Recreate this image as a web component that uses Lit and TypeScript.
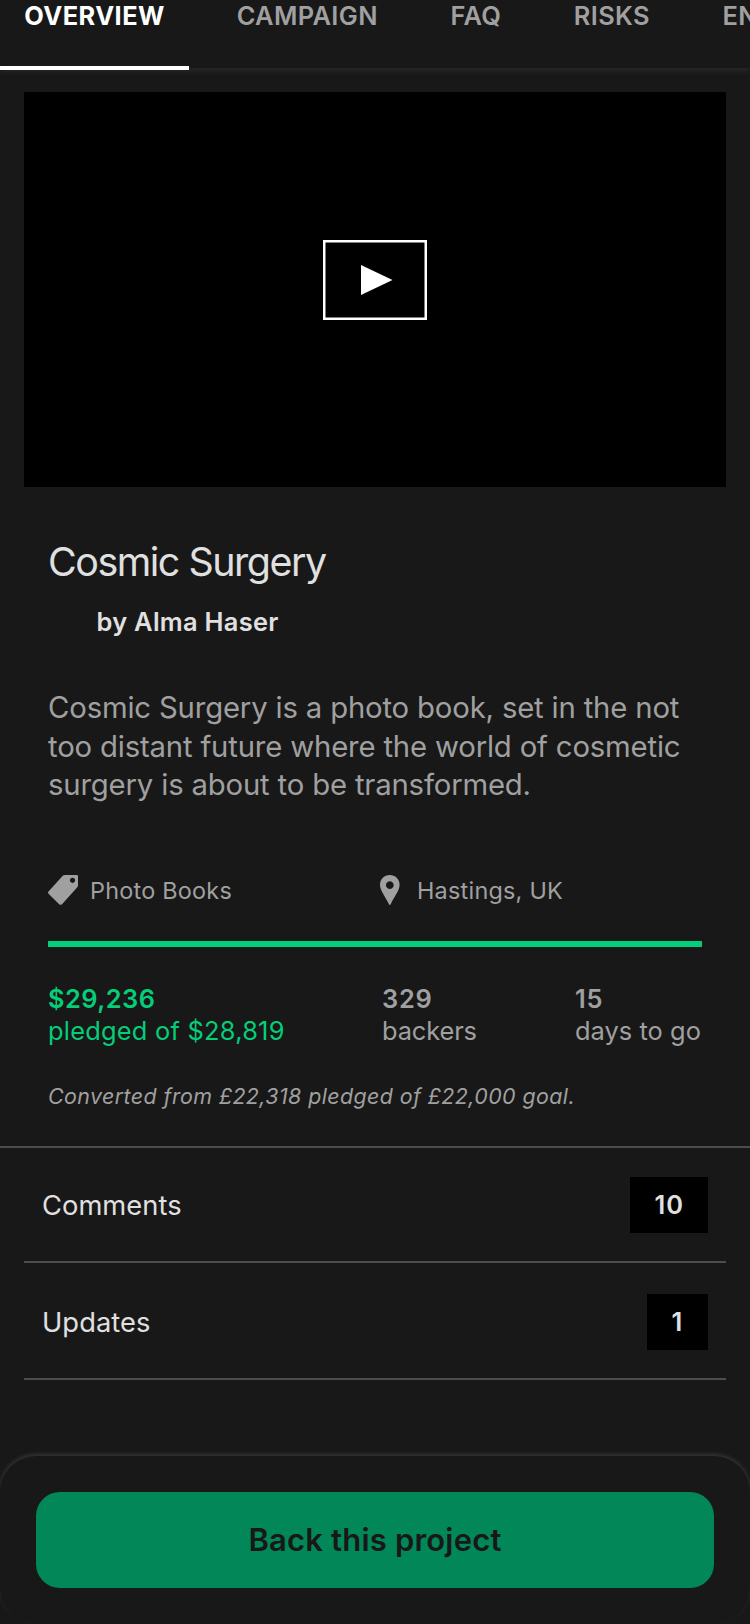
import { LitElement, html, css } from "lit";
import { customElement, property } from "lit/decorators.js";
import { classMap } from "lit/directives/class-map.js";

interface Stat {
  kind: string;
  value: string;
  label: string;
}

@customElement("project-tabs")
class ProjectTabs extends LitElement {
  @property({ attribute: false }) tabs: string[] = [];
  @property({ type: Number }) active = 0;

  static styles = css`
    :host {
      display: block;
      height: 68px;
      box-shadow: 0 2px 8px rgba(255, 255, 255, 0.09);
    }
    .tabs {
      display: flex;
      gap: 72.6px;
      padding-left: 24.3px;
      height: 70px;
    }
    .tab {
      flex: none;
      font-size: 25.4px;
      font-weight: 600;
      line-height: 32px;
      letter-spacing: 0.38px;
      color: #a0a0a0;
      white-space: nowrap;
    }
    .active {
      box-sizing: border-box;
      font-weight: 700;
      letter-spacing: 0.45px;
      color: #fff;
      border-bottom: 4px solid #fff;
      margin: 0 -25.2px 0 -24.3px;
      padding: 0 24.4px 0 24.3px;
    }
  `;

  render() {
    return html`<nav class="tabs">
      ${this.tabs.map(
        (t, i) => html`<span class=${classMap({ tab: true, active: i === this.active })}>${t}</span>`
      )}
    </nav>`;
  }
}

@customElement("count-row")
class CountRow extends LitElement {
  @property() label = "";
  @property({ type: Number }) count = 0;

  static styles = css`
    :host {
      display: flex;
      justify-content: space-between;
      align-items: center;
      height: 56px;
      padding: 31px 18px 28px;
      border-bottom: 2px solid #4d4d4d;
    }
    .label {
      padding-top: 2px;
      font-size: 27.3px;
      line-height: 56px;
      letter-spacing: 0.05px;
      color: #e0e0e0;
    }
    .count {
      box-sizing: border-box;
      min-width: 61px;
      background: #000;
      padding: 0 24px 0 24.5px;
      font-size: 25.4px;
      font-weight: 600;
      line-height: 56px;
      letter-spacing: 1px;
      color: #e0e0e0;
    }
  `;

  render() {
    return html`<span class="label">${this.label}</span><span class="count">${this.count}</span>`;
  }
}

@customElement("app-root")
class AppRoot extends LitElement {
  private tabs = ["OVERVIEW", "CAMPAIGN", "FAQ", "RISKS", "ENVIRONMENT"];
  private stats: Stat[] = [
    { kind: "pledged", value: "$29,236", label: "pledged of $28,819" },
    { kind: "backers", value: "329", label: "backers" },
    { kind: "days", value: "15", label: "days to go" },
  ];

  static styles = css`
    :host {
      display: flex;
      flex-direction: column;
      width: 750px;
      height: 1624px;
      overflow: hidden;
      background: #181818;
      color: #a0a0a0;
      font-family: Inter, "Liberation Sans", sans-serif;
    }
    .video {
      flex: none;
      display: grid;
      place-items: center;
      height: 395px;
      margin: 24px 24px 0;
      background: #000;
    }
    .play {
      display: block;
      width: 104px;
      height: 80px;
      margin-top: -19px;
    }
    .details {
      padding: 51px 48px 34px;
      border-bottom: 2px solid #4d4d4d;
    }
    h1 {
      margin: 0;
      font-size: 39.4px;
      font-weight: 400;
      line-height: 48px;
      letter-spacing: -1.48px;
      color: #e0e0e0;
    }
    .author {
      margin: 20px 0 0 48.5px;
      font-size: 25.4px;
      font-weight: 600;
      line-height: 32px;
      letter-spacing: 0.3px;
      color: #e0e0e0;
    }
    .blurb {
      margin: 51.2px -10px 0 0;
      font-size: 29.3px;
      line-height: 38.5px;
      letter-spacing: -0.17px;
    }
    .meta {
      display: grid;
      grid-template-columns: 332px 1fr;
      margin-top: 70.3px;
      font-size: 23.4px;
      line-height: 32px;
      height: 30px;
      letter-spacing: 0.24px;
    }
    .meta-item {
      display: flex;
      gap: 12px;
    }
    .pin {
      gap: 17px;
    }
    .icon {
      display: block;
      height: 30px;
      fill: #a0a0a0;
    }
    .progress {
      height: 6px;
      margin-top: 36px;
      background: #05ce78;
    }
    .stats {
      display: grid;
      grid-template-columns: 334px 193px 1fr;
      margin-top: 36px;
      font-size: 25.4px;
      line-height: 32px;
      white-space: nowrap;
    }
    .value {
      font-weight: 600;
      letter-spacing: 0.45px;
    }
    .pledged {
      color: #05ce78;
      letter-spacing: 0.24px;
    }
    .backers {
      letter-spacing: -0.12px;
    }
    .days {
      letter-spacing: 0.05px;
    }
    .backers .value,
    .days .value {
      letter-spacing: 0.8px;
    }
    .converted {
      margin-top: 33px;
      font-size: 21.4px;
      font-style: italic;
      line-height: 32px;
      letter-spacing: 0.42px;
      white-space: nowrap;
    }
    .links {
      margin: -2px 24px 0;
    }
    .footer {
      flex: none;
      box-sizing: border-box;
      height: 168px;
      margin-top: auto;
      padding: 36px;
      border-radius: 36px;
      background: #181818;
      box-shadow: 0 -2px 4px rgba(255, 255, 255, 0.13);
    }
    .back {
      display: block;
      box-sizing: border-box;
      width: 100%;
      height: 96px;
      border: 0;
      border-radius: 24px;
      padding: 0 0 2px;
      background: #028858;
      color: #181818;
      font-family: inherit;
      font-size: 31px;
      font-weight: 600;
      letter-spacing: 0.18px;
    }
  `;

  render() {
    return html`
      <project-tabs .tabs=${this.tabs}></project-tabs>
      <div class="video">
        <svg class="play" viewBox="0 0 104 80">
          <rect x="1.25" y="1.25" width="101.5" height="77.5" fill="none" stroke="#fff" stroke-width="2.5" />
          <path d="M38 25L69.5 40L38 55Z" fill="#fff" />
        </svg>
      </div>
      <section class="details">
        <h1>Cosmic Surgery</h1>
        <div class="author">by Alma Haser</div>
        <div class="blurb">
          Cosmic Surgery is a photo book, set in the not<br />
          too distant future where the world of cosmetic<br />
          surgery is about to be transformed.
        </div>
        <div class="meta">
          <div class="meta-item">
            <svg class="icon" width="30" viewBox="0 0 30 30">
              <path
                fill-rule="evenodd"
                d="M15 0.6Q15.7 0 16.6 0H29Q30 0 30 1V10.6Q30 11.5 29.3 12.2L14 29.3Q12.6 30.4 11.2 29.3L0.5 18.8Q-0.4 17.6 0.5 16.4ZM24.5 2.7a2.6 2.6 0 1 0 0.01 0Z"
              />
            </svg>
            <span>Photo Books</span>
          </div>
          <div class="meta-item pin">
            <svg class="icon" width="20" viewBox="0 0 20 30">
              <path
                fill-rule="evenodd"
                d="M9.8 0C15.2 0 19.6 4.2 19.6 9.7C19.6 15.4 14.2 21.6 10.8 29Q10.3 30 9.8 30Q9.3 30 8.8 29C5.4 21.6 0 15.4 0 9.7C0 4.2 4.4 0 9.8 0ZM9.8 6.2a3.9 3.9 0 1 0 0.01 0Z"
              />
            </svg>
            <span>Hastings, UK</span>
          </div>
        </div>
        <div class="progress"></div>
        <div class="stats">
          ${this.stats.map(
            (s) => html`<div class=${s.kind}>
              <div class="value">${s.value}</div>
              <div>${s.label}</div>
            </div>`
          )}
        </div>
        <div class="converted">Converted from £22,318 pledged of £22,000 goal.</div>
      </section>
      <div class="links">
        <count-row label="Comments" count="10"></count-row>
        <count-row label="Updates" count="1"></count-row>
      </div>
      <div class="footer"><button class="back">Back this project</button></div>
    `;
  }
}
